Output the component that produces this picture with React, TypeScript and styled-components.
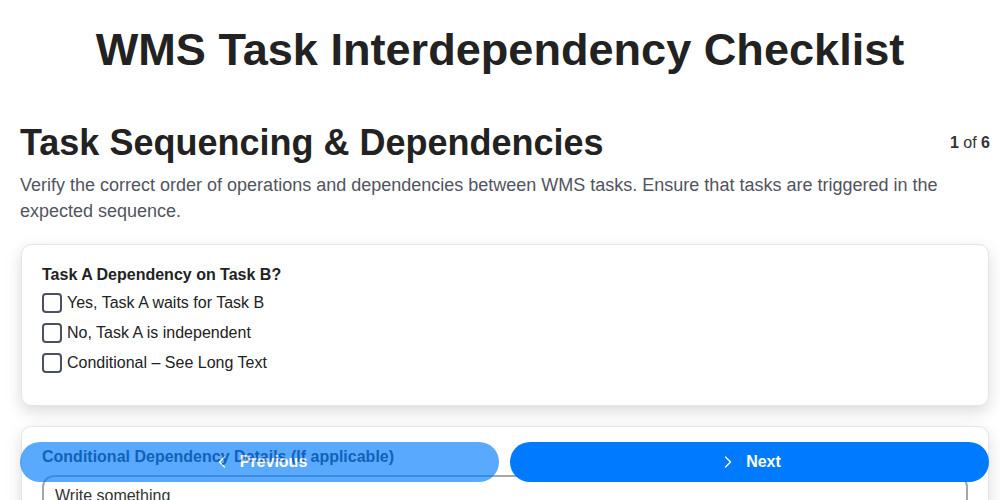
import React from "react";
import styled, { createGlobalStyle } from "styled-components";
import { ChevronLeft, ChevronRight } from "lucide-react";

const GlobalStyle = createGlobalStyle`
  html, body {
    margin: 0;
    padding: 0;
    background: #ffffff;
    font-family: "Liberation Sans", Arial, sans-serif;
    color: #222;
  }
  * { box-sizing: border-box; }
`;

const Page = styled.div`
  padding: 23px 20px 120px 20px;
`;

const Title = styled.h1`
  margin: 0;
  font-size: 45.1px;
  line-height: 1.2;
  font-weight: 700;
  text-align: center;
  color: #222;
`;

const Step = styled.section`
  margin: 44px -10px 0 0;
`;

const StepHeader = styled.div`
  display: flex;
  align-items: center;
  justify-content: space-between;
`;

const StepTitle = styled.h2`
  margin: 0;
  font-size: 36px;
  line-height: 1.2;
  font-weight: 700;
  color: #222;
`;

const Counter = styled.div`
  font-size: 16px;
  color: #333;
  b { font-weight: 700; }
`;

const Description = styled.p`
  margin: 8px 0 20px 0;
  font-size: 18px;
  line-height: 26px;
  color: #51545e;
`;

const Card = styled.div`
  background: #fff;
  border: 1px solid #e4e4ec;
  border-radius: 10px;
  box-shadow: 0 6px 16px rgba(0, 0, 0, 0.14);
  padding: 21px 20px 22px 20px;
  margin: 0 1px 20px 1px;
`;

const Question = styled.div`
  font-size: 16px;
  font-weight: 700;
  color: #222;
  margin-bottom: 9px;
`;

const Option = styled.label`
  display: flex;
  align-items: center;
  gap: 5px;
  height: 20px;
  margin-bottom: 10px;
  font-size: 16px;
  color: #222;
`;

const Box = styled.span`
  width: 20px;
  height: 20px;
  border: 2px solid #4b5060;
  border-radius: 4px;
  background: #fff;
  flex: none;
`;

const FieldLabel = styled.div`
  font-size: 16px;
  font-weight: 700;
  color: #333;
  margin-bottom: 9px;
`;

const TextArea = styled.textarea`
  display: block;
  width: 100%;
  height: 100px;
  border: 2px solid #a4a8ae;
  border-radius: 12px;
  padding: 10px 11px;
  font-family: "Liberation Sans", Arial, sans-serif;
  font-size: 16px;
  color: #333;
  resize: none;
  &::placeholder { color: #333; }
`;

const Nav = styled.div`
  position: fixed;
  left: 0;
  right: 0;
  bottom: 18px;
  display: flex;
  gap: 11px;
  padding: 0 11px 0 20px;
`;

const NavButton = styled.button<{ $dim?: boolean }>`
  flex: 1;
  height: 40px;
  border: none;
  border-radius: 20px;
  background: #007bff;
  opacity: ${(p) => (p.$dim ? 0.65 : 1)};
  color: #fff;
  font-family: "Liberation Sans", Arial, sans-serif;
  font-size: 16px;
  font-weight: 700;
  display: flex;
  align-items: center;
  justify-content: center;
  gap: 8px;
  cursor: pointer;
`;

export default function App() {
  return (
    <>
      <GlobalStyle />
      <Page>
        <Title>WMS Task Interdependency Checklist</Title>
        <Step>
          <StepHeader>
            <StepTitle>Task Sequencing &amp; Dependencies</StepTitle>
            <Counter>
              <b>1</b> of <b>6</b>
            </Counter>
          </StepHeader>
          <Description>
            Verify the correct order of operations and dependencies between WMS tasks. Ensure that
            tasks are triggered in the expected sequence.
          </Description>
          <Card>
            <Question>Task A Dependency on Task B?</Question>
            <Option>
              <Box />
              Yes, Task A waits for Task B
            </Option>
            <Option>
              <Box />
              No, Task A is independent
            </Option>
            <Option>
              <Box />
              Conditional – See Long Text
            </Option>
          </Card>
          <Card>
            <FieldLabel>Conditional Dependency Details (If applicable)</FieldLabel>
            <TextArea placeholder="Write something" />
          </Card>
        </Step>
      </Page>
      <Nav>
        <NavButton $dim>
          <ChevronLeft size={20} strokeWidth={1.5} />
          Previous
        </NavButton>
        <NavButton>
          <ChevronRight size={20} strokeWidth={1.5} />
          Next
        </NavButton>
      </Nav>
    </>
  );
}
